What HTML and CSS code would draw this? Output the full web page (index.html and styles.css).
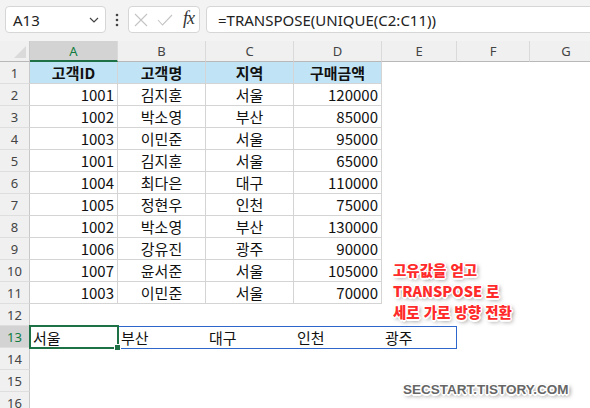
FILE: index.html
```html
<!DOCTYPE html>
<html lang="ko">
<head>
  <meta charset="UTF-8">
  <title>TRANSPOSE UNIQUE</title>
  <link rel="stylesheet" href="styles.css">
</head>
<body>
  <div class="toolbar">
    <div class="namebox">
      <span>A13</span>
      <svg class="chev" width="10" height="6" viewBox="0 0 10 6"><polyline points="1,1 5,5 9,1" fill="none" stroke="#444" stroke-width="1.2"/></svg>
    </div>
    <div class="grip">
      <svg width="4" height="14" viewBox="0 0 4 14"><circle cx="2" cy="2" r="1.3" fill="#444"/><circle cx="2" cy="7" r="1.3" fill="#444"/><circle cx="2" cy="12" r="1.3" fill="#444"/></svg>
    </div>
    <div class="fxbox">
      <svg width="14" height="14" viewBox="0 0 14 14"><path d="M1 1 L13 13 M13 1 L1 13" stroke="#c4c4c4" stroke-width="1.1" fill="none"/></svg>
      <svg width="16" height="12" viewBox="0 0 16 12"><polyline points="1,6 5.5,11 15,1" stroke="#c4c4c4" stroke-width="1.1" fill="none"/></svg>
      <span class="fx"><i>f</i><i>x</i></span>
    </div>
    <div class="formula">=TRANSPOSE(UNIQUE(C2:C11))</div>
  </div>

  <div class="sheet">
    <div class="corner"></div>
    <div class="ch sel">A</div><div class="ch">B</div><div class="ch">C</div><div class="ch">D</div><div class="ch">E</div><div class="ch">F</div><div class="ch">G</div>

    <div class="rh">1</div>
    <div class="c t hd">고객ID</div><div class="c t hd">고객명</div><div class="c t hd">지역</div><div class="c t hd">구매금액</div><div class="c"></div><div class="c"></div><div class="c"></div>

    <div class="rh">2</div>
    <div class="c t r">1001</div><div class="c t m">김지훈</div><div class="c t m">서울</div><div class="c t r">120000</div><div class="c"></div><div class="c"></div><div class="c"></div>

    <div class="rh">3</div>
    <div class="c t r">1002</div><div class="c t m">박소영</div><div class="c t m">부산</div><div class="c t r">85000</div><div class="c"></div><div class="c"></div><div class="c"></div>

    <div class="rh">4</div>
    <div class="c t r">1003</div><div class="c t m">이민준</div><div class="c t m">서울</div><div class="c t r">95000</div><div class="c"></div><div class="c"></div><div class="c"></div>

    <div class="rh">5</div>
    <div class="c t r">1001</div><div class="c t m">김지훈</div><div class="c t m">서울</div><div class="c t r">65000</div><div class="c"></div><div class="c"></div><div class="c"></div>

    <div class="rh">6</div>
    <div class="c t r">1004</div><div class="c t m">최다은</div><div class="c t m">대구</div><div class="c t r">110000</div><div class="c"></div><div class="c"></div><div class="c"></div>

    <div class="rh">7</div>
    <div class="c t r">1005</div><div class="c t m">정현우</div><div class="c t m">인천</div><div class="c t r">75000</div><div class="c"></div><div class="c"></div><div class="c"></div>

    <div class="rh">8</div>
    <div class="c t r">1002</div><div class="c t m">박소영</div><div class="c t m">부산</div><div class="c t r">130000</div><div class="c"></div><div class="c"></div><div class="c"></div>

    <div class="rh">9</div>
    <div class="c t r">1006</div><div class="c t m">강유진</div><div class="c t m">광주</div><div class="c t r">90000</div><div class="c"></div><div class="c"></div><div class="c"></div>

    <div class="rh">10</div>
    <div class="c t r">1007</div><div class="c t m">윤서준</div><div class="c t m">서울</div><div class="c t r">105000</div><div class="c"></div><div class="c"></div><div class="c"></div>

    <div class="rh">11</div>
    <div class="c t r">1003</div><div class="c t m">이민준</div><div class="c t m">서울</div><div class="c t r">70000</div><div class="c"></div><div class="c"></div><div class="c"></div>

    <div class="rh">12</div>
    <div class="c"></div><div class="c"></div><div class="c"></div><div class="c"></div><div class="c"></div><div class="c"></div><div class="c"></div>

    <div class="rh sel">13</div>
    <div class="c active">서울<span class="spill"></span><span class="cursor"></span></div><div class="c">부산</div><div class="c">대구</div><div class="c">인천</div><div class="c">광주</div><div class="c"></div><div class="c"></div>

    <div class="rh">14</div>
    <div class="c"></div><div class="c"></div><div class="c"></div><div class="c"></div><div class="c"></div><div class="c"></div><div class="c"></div>

    <div class="rh">15</div>
    <div class="c"></div><div class="c"></div><div class="c"></div><div class="c"></div><div class="c"></div><div class="c"></div><div class="c"></div>

    <div class="rh">16</div>
    <div class="c"></div><div class="c"></div><div class="c"></div><div class="c"></div><div class="c"></div><div class="c"></div><div class="c"></div>
  </div>

  <div class="note">고유값을 얻고<br>TRANSPOSE 로<br>세로 가로 방향 전환</div>
  <div class="mark">SECSTART.TISTORY.COM</div>
</body>
</html>
```

FILE: styles.css
```css
body {
  margin: 0;
  width: 590px;
  height: 408px;
  overflow: hidden;
  background: #fff;
  font-family: "Noto Sans CJK KR", sans-serif;
  position: relative;
}
.toolbar {
  height: 41px;
  box-sizing: border-box;
  background: #f3f3f3;
  display: flex;
  align-items: flex-start;
  padding: 6px 0 0 5px;
  font-family: "Noto Sans", "Noto Sans CJK KR", sans-serif;
  color: #222;
}
.namebox, .fxbox, .formula {
  height: 27px;
  box-sizing: border-box;
  background: #fff;
  border: 1px solid #d6d6d6;
  border-radius: 4px;
  display: flex;
  align-items: center;
}
.namebox {
  width: 101px;
  padding: 0 6px 0 7px;
  justify-content: space-between;
  font-size: 15px;
}
.grip {
  width: 22px;
  height: 27px;
  display: flex;
  align-items: center;
  justify-content: center;
}
.fxbox {
  width: 72px;
  padding: 0 5px 0 5px;
  justify-content: space-between;
}
.fx {
  font-family: "Liberation Serif", serif;
  font-size: 18px;
  color: #333;
  letter-spacing: -1px;
  margin-top: -2px;
}
.formula {
  flex: 1;
  margin-left: 6px;
  margin-right: -8px;
  padding-left: 11px;
  font-size: 15px;
  white-space: nowrap;
}

.sheet {
  display: grid;
  grid-template-columns: 30px 88px 88px 88px 88px 75px 73px 73px;
  grid-template-rows: 21px;
  grid-auto-rows: 22px;
  font-size: 15px;
  color: #111;
}
.corner {
  background: #f0f0f0;
  border-right: 1px solid #c9c9c9;
  border-bottom: 1px solid #b8b8b8;
  position: relative;
}
.corner::after {
  content: "";
  position: absolute;
  right: 3px;
  bottom: 3px;
  border-left: 12px solid transparent;
  border-bottom: 12px solid #dadada;
}
.ch {
  background: #f0f0f0;
  border-right: 1px solid #dadada;
  border-bottom: 1px solid #b8b8b8;
  display: flex;
  align-items: center;
  justify-content: center;
  font-family: "Noto Sans", sans-serif;
  font-size: 13px;
  color: #444;
}
.ch.sel {
  background: #d3d3d3;
  color: #107c41;
  border-bottom: 2px solid #1e7145;
}
.rh {
  background: #f0f0f0;
  border-right: 1px solid #c9c9c9;
  border-bottom: 1px solid #dedede;
  display: flex;
  align-items: center;
  justify-content: center;
  font-family: "Noto Sans", sans-serif;
  font-size: 13px;
  color: #444;
}
.rh.sel {
  background: #d3d3d3;
  color: #107c41;
}
.c {
  box-sizing: border-box;
  display: flex;
  align-items: center;
  padding: 0 3px;
  white-space: nowrap;
}
.c.t {
  border-right: 1px solid #d4d4d4;
  border-bottom: 1px solid #d4d4d4;
}
.c.hd {
  background: #c0e4f5;
  font-weight: bold;
  justify-content: center;
}
.c.r { justify-content: flex-end; }
.c.m { justify-content: center; }
.active { position: relative; }
.spill {
  position: absolute;
  left: 0;
  top: 0;
  width: 427px;
  height: 23px;
  box-sizing: border-box;
  border: 1px solid #2f66cc;
}
.cursor {
  position: absolute;
  left: -1px;
  top: -1px;
  width: 90px;
  height: 24px;
  box-sizing: border-box;
  border: 2px solid #1e7145;
}
.cursor::after {
  content: "";
  position: absolute;
  right: -4px;
  bottom: -4px;
  width: 5px;
  height: 5px;
  background: #1e7145;
  border: 1px solid #fff;
}

.note {
  position: absolute;
  left: 393px;
  top: 259px;
  font-size: 14.5px;
  line-height: 21px;
  font-weight: 900;
  color: #ff2b2b;
  text-shadow: 1.5px 0 0 #fff, -1.5px 0 0 #fff, 0 1.5px 0 #fff, 0 -1.5px 0 #fff,
    1px 1px 0 #fff, -1px -1px 0 #fff, 1px -1px 0 #fff, -1px 1px 0 #fff,
    2px 2px 4px rgba(0, 0, 0, 0.55);
}
.mark {
  position: absolute;
  left: 403px;
  top: 382px;
  font-family: "Liberation Sans", sans-serif;
  font-size: 13.5px;
  line-height: 16px;
  font-weight: bold;
  color: #666;
  text-shadow: 1.5px 0 0 #fff, -1.5px 0 0 #fff, 0 1.5px 0 #fff, 0 -1.5px 0 #fff,
    1px 1px 0 #fff, -1px -1px 0 #fff, 1px -1px 0 #fff, -1px 1px 0 #fff,
    2px 2px 4px rgba(0, 0, 0, 0.6);
}
```
